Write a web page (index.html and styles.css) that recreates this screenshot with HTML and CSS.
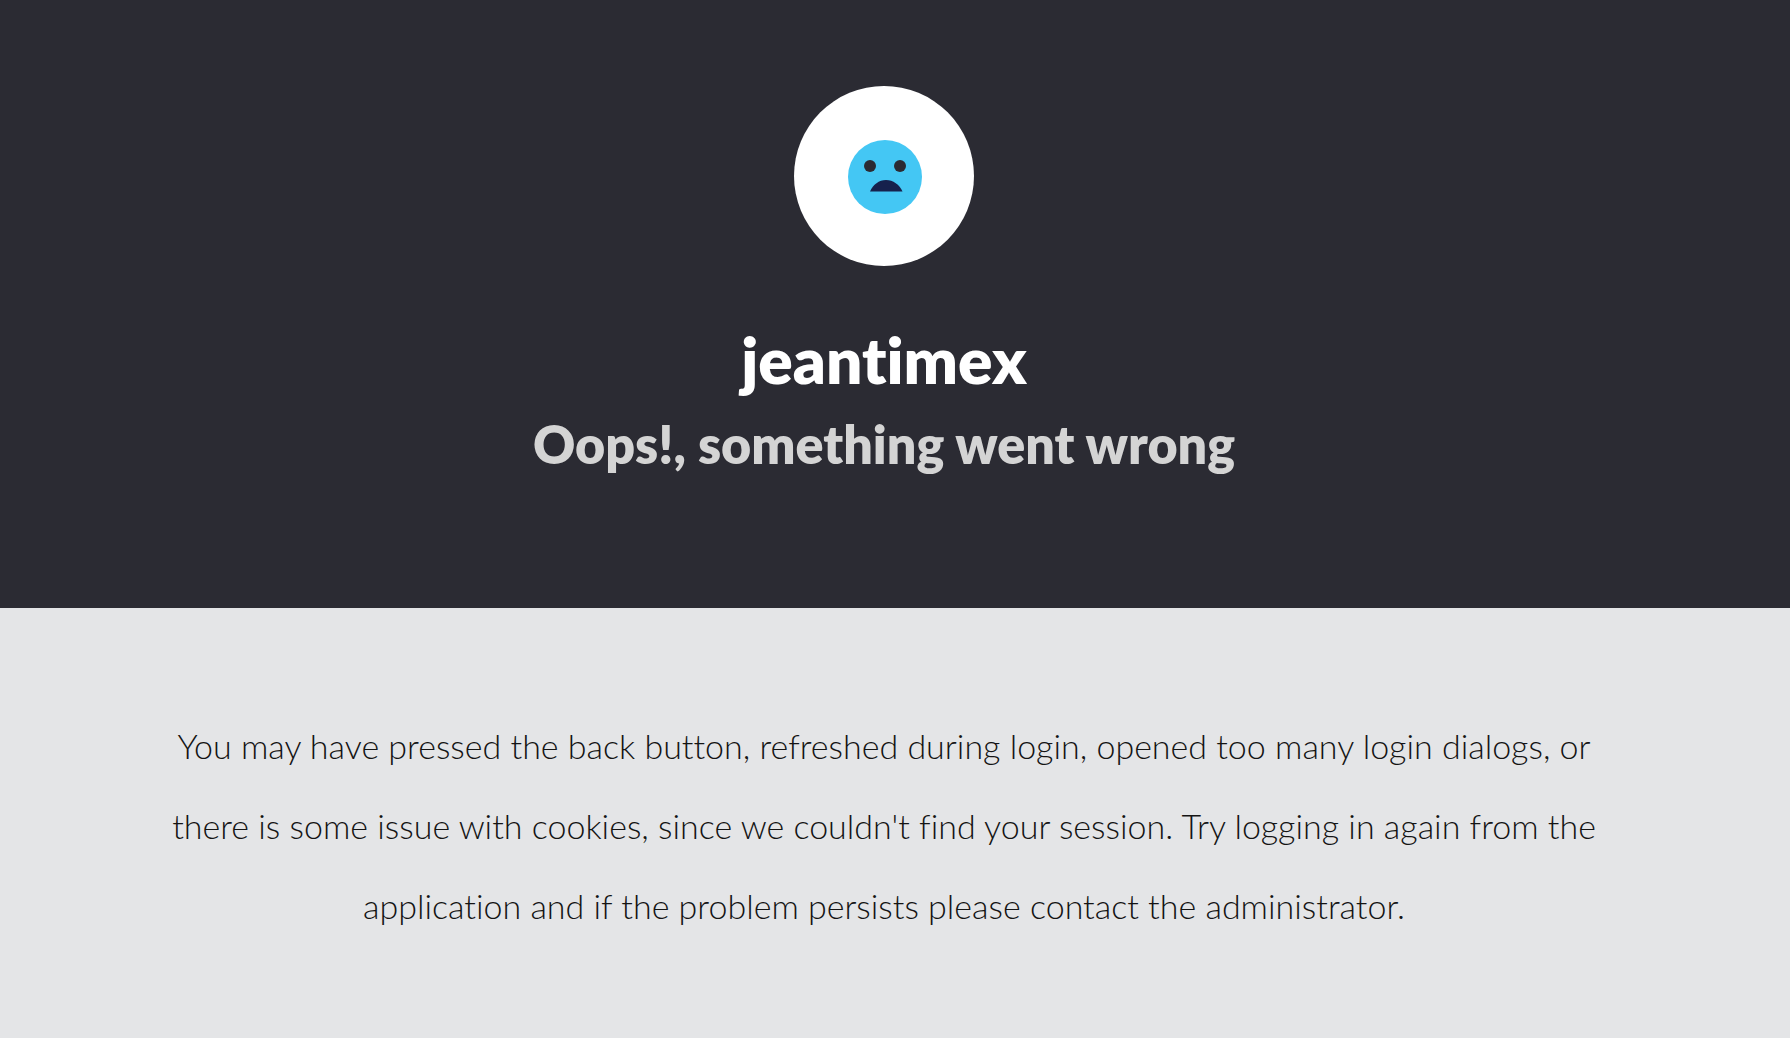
FILE: index.html
```html
<!DOCTYPE html>
<html lang="en">
<head>
    <meta charset="UTF-8">
    <meta name="viewport" content="width=device-width, initial-scale=1.0">
    <title>jeantimex</title>
    <link rel="stylesheet" href="styles.css">
</head>
<body>
    <header class="header">
        <div class="logo">
            <svg class="logo-icon" viewBox="0 0 74 74" aria-hidden="true">
                <circle cx="37" cy="37" r="37" fill="#44c7f4"/>
                <circle cx="22" cy="26" r="6" fill="#2b2b33"/>
                <circle cx="52" cy="26" r="6" fill="#2b2b33"/>
                <path d="M22 51.500C25 44.500 31 40 38 40s13.500 4.500 16.500 11.500z" fill="#16214d"/>
            </svg>
        </div>
        <h1 class="title">jeantimex</h1>
        <h2 class="subtitle">Oops!, something went wrong</h2>
    </header>

    <main class="content">
        <p class="message">You may have pressed the back button, refreshed during login, opened too many login dialogs, or there is some issue with cookies, since we couldn't find your session. Try logging in again from the application and if the problem persists please contact the administrator.</p>
    </main>
</body>
</html>
```

FILE: styles.css
```css
* {
    box-sizing: border-box;
}
body {
    margin: 0;
    min-height: 100vh;
    font-family: "Avenir Next", Lato, sans-serif;
    font-variant-ligatures: none;
    text-align: center;
    color: #141414;
    background-color: #e4e5e7;
}
.header {
    display: flex;
    flex-direction: column;
    align-items: center;
    padding: 86px 22px 124px 0;
    background-color: #2b2b33;
}
.logo {
    display: flex;
    align-items: center;
    justify-content: center;
    width: 180px;
    height: 180px;
    margin-bottom: 54px;
    padding: 2px 0 0 2px;
    background-color: #fff;
    border-radius: 50%;
}
.logo-icon {
    width: 74px;
    height: 74px;
}
.title {
    margin: 0 0 4px;
    font-size: 64px;
    line-height: 80px;
    font-weight: 800;
    color: #fff;
}
.subtitle {
    margin: 0;
    font-size: 52px;
    line-height: 80px;
    font-weight: 800;
    color: #d4d4d4;
}
.content {
    padding: 98px 182px 80px 160px;
}
.message {
    margin: 0;
    font-size: 34px;
    line-height: 80px;
    font-weight: 300;
}
```
